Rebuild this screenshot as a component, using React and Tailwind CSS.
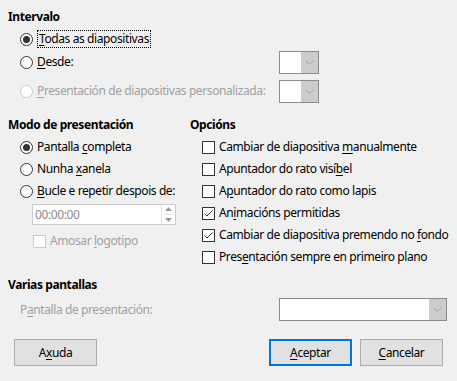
const U = ({ children }) => <span className="underline underline-offset-2">{children}</span>

function Radio({ checked, disabled }) {
  return (
    <span
      className={`flex h-[13px] w-[13px] shrink-0 items-center justify-center rounded-full border bg-white ${
        disabled ? "border-[#cccccc]" : "border-[#333333]"
      }`}
    >
      {checked && <span className="h-[7px] w-[7px] rounded-full bg-[#333333]" />}
    </span>
  )
}

function Check({ checked, disabled }) {
  return (
    <span
      className={`flex h-[13px] w-[13px] shrink-0 items-center justify-center border bg-white ${
        disabled ? "border-[#cccccc]" : "border-[#333333]"
      }`}
    >
      {checked && (
        <svg width="11" height="11" viewBox="0 0 11 11">
          <path d="M1.5 5.5 L4 8 L9.5 2.5" fill="none" stroke="#333" strokeWidth="1" />
        </svg>
      )}
    </span>
  )
}

function Chevron() {
  return (
    <svg width="9" height="5" viewBox="0 0 9 5">
      <path d="M0.5 0.5 L4.5 4.5 L8.5 0.5" fill="none" stroke="#a0a0a0" strokeWidth="1" />
    </svg>
  )
}

function Combo({ width }) {
  return (
    <div className={`flex h-[23px] shrink-0 border border-[#8c8c8c] bg-white ${width}`}>
      <div className="flex-1" />
      <div className="flex w-[17px] items-center justify-center bg-[#cccccc]">
        <Chevron />
      </div>
    </div>
  )
}

function Row({ children, className = "" }) {
  return <div className={`flex h-[22px] items-center gap-[4px] ${className}`}>{children}</div>
}

export default function App() {
  return (
    <div
      className="h-[381px] w-[457px] overflow-hidden whitespace-nowrap bg-[#f0f0f0] text-[12px] leading-none tracking-[-0.4px] text-black"
      style={{ fontFamily: '"Noto Sans", "Open Sans", sans-serif' }}
    >
      <div className="px-2 pt-[9px]">
        <div className="h-4 leading-4 font-bold">Intervalo</div>
        <div className="mt-[3px] pl-3">
          <Row className="gap-[2px]">
            <Radio checked />
            <span className="border border-dotted border-black px-px py-[2px]">
              <U>T</U>odas as diapositivas
            </span>
          </Row>
          <div className="flex h-[24px] items-center justify-between pr-[130px]">
            <div className="flex items-center gap-[4px]">
              <Radio />
              <span>
                <U>D</U>esde:
              </span>
            </div>
            <Combo width="w-[40px]" />
          </div>
          <div className="mt-[5px] flex h-[24px] items-center justify-between pr-[130px]">
            <div className="flex items-center gap-[4px] text-[#a0a0a0]">
              <Radio disabled />
              <span>
                <U>P</U>resentación de diapositivas personalizada:
              </span>
            </div>
            <Combo width="w-[40px]" />
          </div>
        </div>

        <div className="mt-[14px] flex">
          <div className="w-[182px]">
            <div className="h-4 leading-4 font-bold">Modo de presentación</div>
            <div className="mt-[3px] pl-3">
              <Row>
                <Radio checked />
                <span>
                  Pantalla <U>c</U>ompleta
                </span>
              </Row>
              <Row>
                <Radio />
                <span>
                  Nunha <U>x</U>anela
                </span>
              </Row>
              <Row>
                <Radio />
                <span>
                  <U>B</U>ucle e repetir despois de:
                </span>
              </Row>
              <div className="ml-3 mt-[2px] flex h-[21px] w-[144px] border border-[#cccccc] bg-white">
                <div className="flex flex-1 items-center pl-[2px] text-[#8d8d8d]">00:00:00</div>
                <div className="flex w-[14px] flex-col items-center justify-center gap-[3px] border-l border-[#e3e3e3]">
                  <svg width="7" height="4" viewBox="0 0 7 4">
                    <path d="M0 4 L3.5 0 L7 4 Z" fill="#9a9a9a" />
                  </svg>
                  <div className="h-px w-[10px] bg-[#e3e3e3]" />
                  <svg width="7" height="4" viewBox="0 0 7 4">
                    <path d="M0 0 L3.5 4 L7 0 Z" fill="#9a9a9a" />
                  </svg>
                </div>
              </div>
              <Row className="ml-[13px] mt-[5px] text-[#a0a0a0]">
                <Check disabled />
                <span>
                  Amosar <U>l</U>ogotipo
                </span>
              </Row>
            </div>
          </div>
          <div className="flex-1">
            <div className="h-4 leading-4 font-bold">Opcións</div>
            <div className="mt-[3px] pl-3">
              <Row>
                <Check />
                <span>
                  Cambiar de diapositiva <U>m</U>anualmente
                </span>
              </Row>
              <Row>
                <Check />
                <span>
                  Apuntador do rato visí<U>b</U>el
                </span>
              </Row>
              <Row>
                <Check />
                <span>
                  A<U>p</U>untador do rato como lapis
                </span>
              </Row>
              <Row>
                <Check checked />
                <span>
                  An<U>i</U>macións permitidas
                </span>
              </Row>
              <Row>
                <Check checked />
                <span>
                  Cambiar de diapositiva premendo no <U>f</U>ondo
                </span>
              </Row>
              <Row>
                <Check />
                <span>
                  Pres<U>e</U>ntación sempre en primeiro plano
                </span>
              </Row>
            </div>
          </div>
        </div>

        <div className="mt-[9px] h-4 leading-4 font-bold">Varias pantallas</div>
        <div className="mt-[5px] flex items-center justify-between pl-3 pr-[2px]">
          <span className="text-[#a0a0a0]">
            P<U>a</U>ntalla de presentación:
          </span>
          <Combo width="w-[168px]" />
        </div>

        <div className="mt-[18px] flex items-center pl-[6px] pr-[6px]">
          <button className="flex h-[27px] w-[83px] items-center justify-center border border-[#adadad] bg-[#e1e1e1]">
            A<U>x</U>uda
          </button>
          <div className="flex-1" />
          <button className="flex h-[27px] w-[83px] items-center justify-center border-2 border-[#0078d7] bg-[#e1e1e1]">
            <U>A</U>ceptar
          </button>
          <button className="ml-2 flex h-[27px] w-[83px] items-center justify-center border border-[#adadad] bg-[#e1e1e1]">
            <U>C</U>ancelar
          </button>
        </div>
      </div>
    </div>
  )
}
